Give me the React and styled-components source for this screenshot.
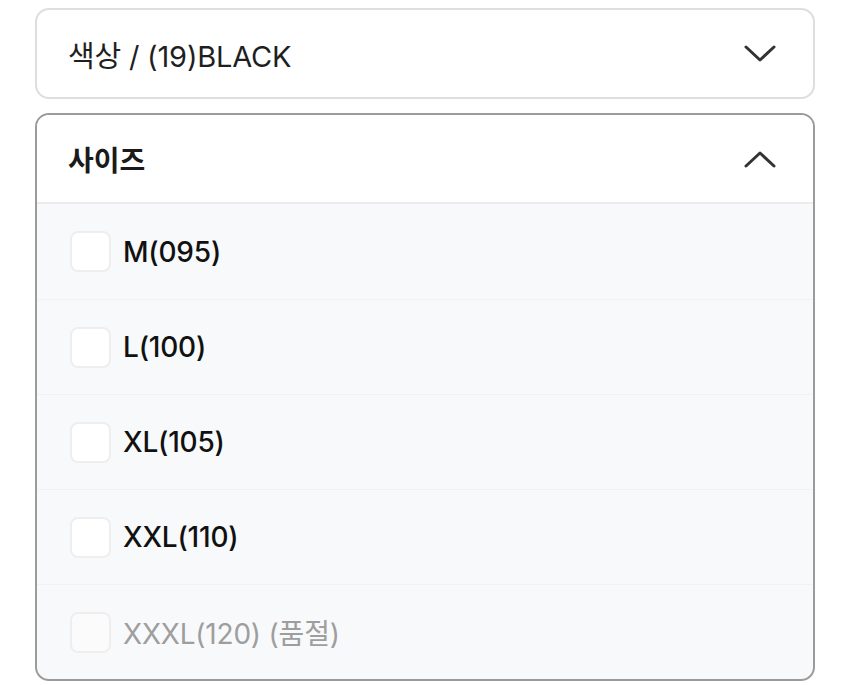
import React from "react";
import styled, { createGlobalStyle } from "styled-components";

const Global = createGlobalStyle`
  html, body { margin: 0; padding: 0; background: #ffffff; }
  body { font-family: Inter, "Noto Sans CJK KR", sans-serif; -webkit-font-smoothing: antialiased; }
  * { box-sizing: border-box; }
`;

const Page = styled.div`
  padding: 8px 35px 0 35px;
  width: 850px;
  display: flex;
  flex-direction: column;
  gap: 14px;
`;

const Select = styled.div`
  height: 91px;
  border: 2px solid #dedede;
  border-radius: 14px;
  background: #fff;
  display: flex;
  align-items: center;
  justify-content: space-between;
  padding: 0 37px 0 31px;
`;

const SelectLabel = styled.span`
  font-size: 29px;
  font-weight: 400;
  color: #1f1f1f;
  letter-spacing: -0.2px;
`;

const Panel = styled.div`
  border: 2px solid #9b9b9b;
  border-radius: 14px;
  overflow: hidden;
  background: #f8f9fb;
`;

const PanelHeader = styled.div`
  height: 89px;
  background: #fff;
  border-bottom: 2px solid #ececee;
  display: flex;
  align-items: center;
  justify-content: space-between;
  padding: 0 37px 0 31px;
`;

const HeaderLabel = styled.span`
  font-size: 28px;
  font-weight: 700;
  color: #1a1a1a;
`;

const Row = styled.label`
  height: 95px;
  display: flex;
  align-items: center;
  gap: 12px;
  padding: 0 0 0 33px;
  border-top: ${(p) => (p.$first ? "none" : "1px solid #f1f2f5")};
`;

const Box = styled.span`
  width: 41px;
  height: 41px;
  border-radius: 8px;
  border: 2px solid #eeeeee;
  background: ${(p) => (p.$disabled ? "#fbfbfc" : "#ffffff")};
  flex-shrink: 0;
`;

const OptionText = styled.span`
  font-size: 28px;
  font-weight: ${(p) => (p.$disabled ? 400 : 500)};
  color: ${(p) => (p.$disabled ? "#9e9e9e" : "#111111")};
  letter-spacing: -0.2px;
`;

const Chevron = ({ up }) => (
  <svg width="32" height="18" viewBox="0 0 32 18" fill="none">
    <path
      d={up ? "M2 16 L16 3 L30 16" : "M2 2 L16 15 L30 2"}
      stroke="#333"
      strokeWidth="3"
      strokeLinecap="round"
      strokeLinejoin="round"
    />
  </svg>
);

const options = [
  { label: "M(095)" },
  { label: "L(100)" },
  { label: "XL(105)" },
  { label: "XXL(110)" },
  { label: "XXXL(120) (품절)", disabled: true },
];

export default function App() {
  return (
    <>
      <Global />
      <Page>
        <Select>
          <SelectLabel>색상 / (19)BLACK</SelectLabel>
          <Chevron />
        </Select>
        <Panel>
          <PanelHeader>
            <HeaderLabel>사이즈</HeaderLabel>
            <Chevron up />
          </PanelHeader>
          {options.map((o, i) => (
            <Row key={o.label} $first={i === 0}>
              <Box $disabled={o.disabled} />
              <OptionText $disabled={o.disabled}>{o.label}</OptionText>
            </Row>
          ))}
        </Panel>
      </Page>
    </>
  );
}
